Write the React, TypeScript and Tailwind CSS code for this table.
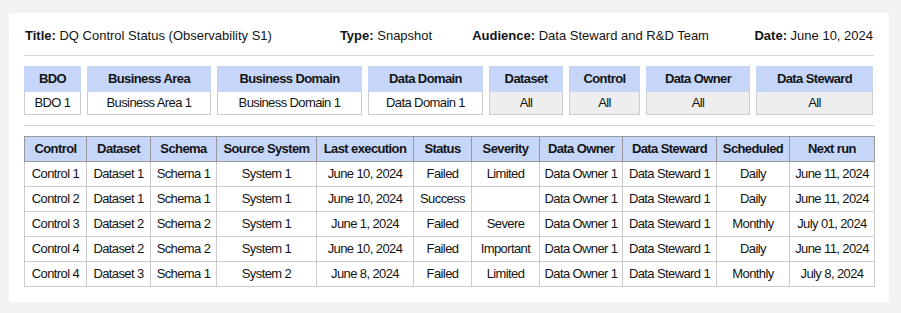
import React from "react";

const filters = [
  { label: "BDO", value: "BDO 1", w: "w-[57px]", all: false },
  { label: "Business Area", value: "Business Area 1", w: "w-[124px]", all: false },
  { label: "Business Domain", value: "Business Domain 1", w: "w-[145px]", all: false },
  { label: "Data Domain", value: "Data Domain 1", w: "w-[115px]", all: false },
  { label: "Dataset", value: "All", w: "w-[74px]", all: true },
  { label: "Control", value: "All", w: "w-[71px]", all: true },
  { label: "Data Owner", value: "All", w: "w-[104px]", all: true },
  { label: "Data Steward", value: "All", w: "w-[117px]", all: true },
];

const columns = [
  { label: "Control", w: "w-[62px]" },
  { label: "Dataset", w: "w-[64px]" },
  { label: "Schema", w: "w-[66px]" },
  { label: "Source System", w: "w-[100px]" },
  { label: "Last execution", w: "w-[97px]" },
  { label: "Status", w: "w-[58px]" },
  { label: "Severity", w: "w-[68px]" },
  { label: "Data Owner", w: "w-[83px]" },
  { label: "Data Steward", w: "w-[94px]" },
  { label: "Scheduled", w: "w-[73px]" },
  { label: "Next run", w: "w-[85px]" },
];

const rows = [
  ["Control 1", "Dataset 1", "Schema 1", "System 1", "June 10, 2024", "Failed", "Limited", "Data Owner 1", "Data Steward 1", "Daily", "June 11, 2024"],
  ["Control 2", "Dataset 1", "Schema 1", "System 1", "June 10, 2024", "Success", "", "Data Owner 1", "Data Steward 1", "Daily", "June 11, 2024"],
  ["Control 3", "Dataset 2", "Schema 2", "System 1", "June 1, 2024", "Failed", "Severe", "Data Owner 1", "Data Steward 1", "Monthly", "July 01, 2024"],
  ["Control 4", "Dataset 2", "Schema 2", "System 1", "June 10, 2024", "Failed", "Important", "Data Owner 1", "Data Steward 1", "Daily", "June 11, 2024"],
  ["Control 4", "Dataset 3", "Schema 1", "System 2", "June 8, 2024", "Failed", "Limited", "Data Owner 1", "Data Steward 1", "Monthly", "July 8, 2024"],
];

const Meta = ({ label, value, className = "" }: { label: string; value: string; className?: string }) => (
  <div className={className}>
    <span className="font-bold">{label}:</span> {value}
  </div>
);

export default function App() {
  return (
    <div
      className="w-[901px] h-[313px] bg-[#f2f2f2] pt-[13px] pl-[9px] text-[13px] text-[#141414]"
      style={{ fontFamily: '"Liberation Sans", Arial, sans-serif' }}
    >
      <div className="w-[880px] h-[289px] bg-white px-[15px] pt-[13px]">
        {/* Header meta */}
        <div className="flex items-center h-[20px] px-px">
          <Meta label="Title" value="DQ Control Status (Observability S1)" />
          <Meta label="Type" value="Snapshot" className="ml-[68px]" />
          <Meta label="Audience" value="Data Steward and R&D Team" className="ml-[40px]" />
          <Meta label="Date" value="June 10, 2024" className="ml-auto" />
        </div>
        <div className="h-px bg-[#d4d4d4] mt-[9px]" />

        {/* Filters */}
        <div className="flex gap-[6px] mt-[10px] tracking-[-0.6px]">
          {filters.map((f) => (
            <div key={f.label} className={f.w}>
              <div className="h-[26px] bg-[#c6d6f8] font-bold flex items-center justify-center">
                {f.label}
              </div>
              <div
                className={`h-[23px] border border-t-0 border-[#cccccc] flex items-center justify-center ${
                  f.all ? "bg-[#eeeeee]" : "bg-white"
                }`}
              >
                {f.value}
              </div>
            </div>
          ))}
        </div>
        <div className="h-px bg-[#d4d4d4] mt-[10px]" />

        {/* Table */}
        <table className="mt-[10px] border-collapse table-fixed w-[850px] tracking-[-0.6px]">
          <thead>
            <tr className="bg-[#c6d6f8]">
              {columns.map((c) => (
                <th key={c.label} className={`${c.w} h-[25px] border border-[#999999] font-bold text-center p-0`}>
                  {c.label}
                </th>
              ))}
            </tr>
          </thead>
          <tbody>
            {rows.map((r, i) => (
              <tr key={i}>
                {r.map((cell, j) => (
                  <td key={j} className="h-[25px] border border-[#cccccc] text-center p-0 whitespace-nowrap">
                    {cell}
                  </td>
                ))}
              </tr>
            ))}
          </tbody>
        </table>
      </div>
    </div>
  );
}
